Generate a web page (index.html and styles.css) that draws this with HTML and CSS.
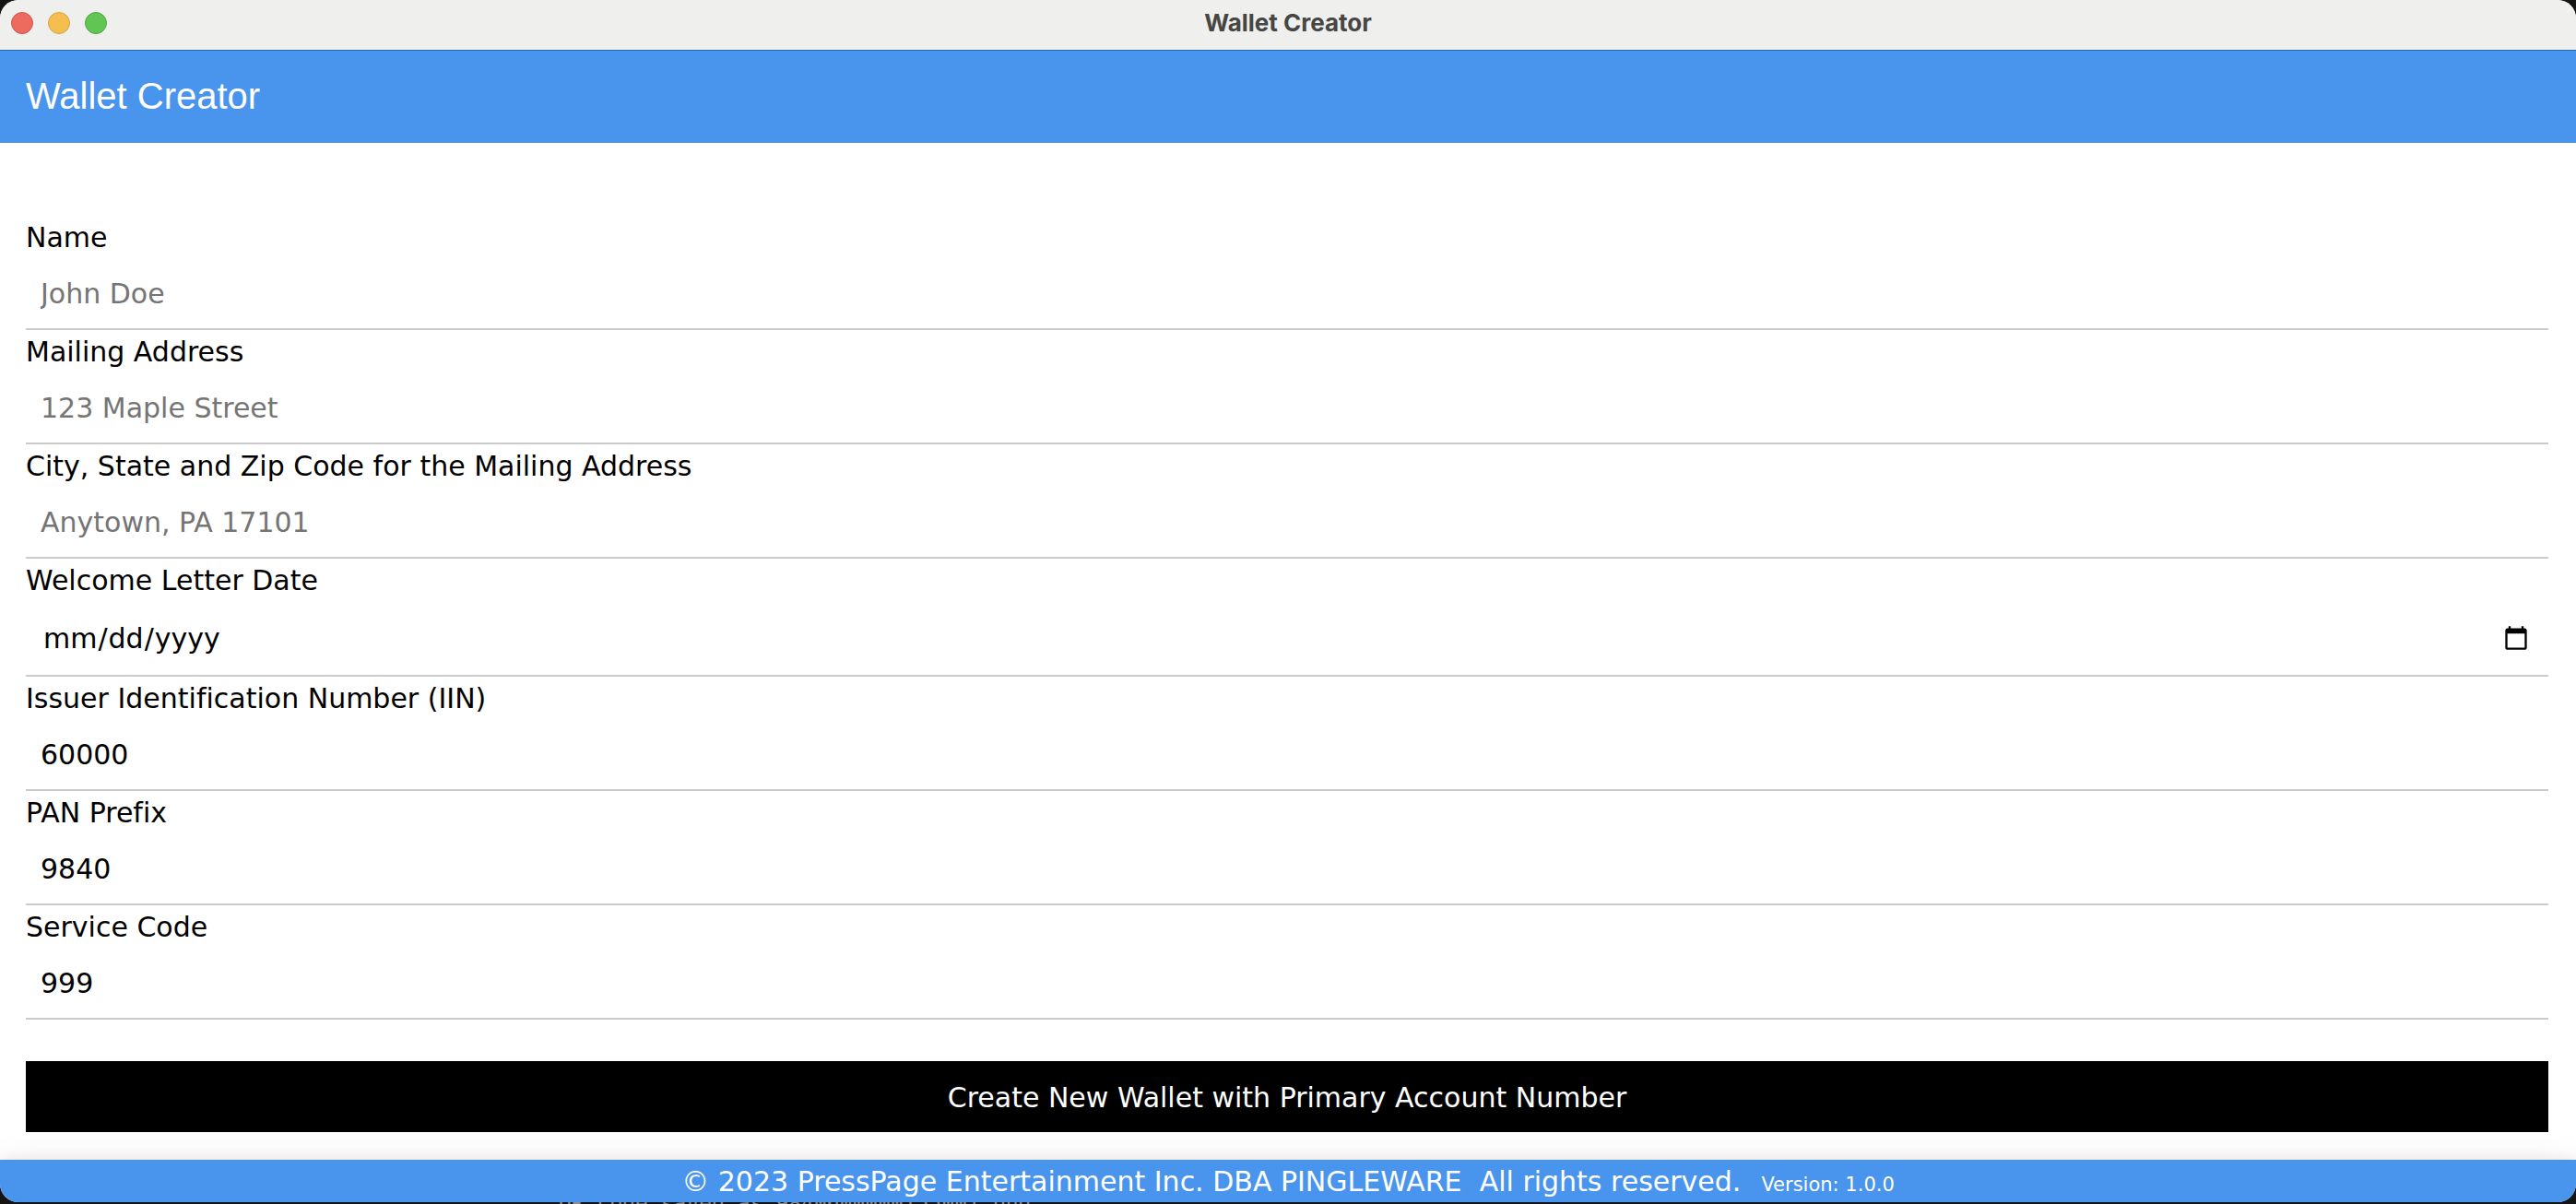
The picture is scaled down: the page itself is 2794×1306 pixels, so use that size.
FILE: index.html
```html
<!DOCTYPE html>
<html lang="en">
<head>
<meta charset="utf-8">
<title>Wallet Creator</title>
<link rel="stylesheet" href="styles.css">
</head>
<body>
<div class="window">
  <div class="titlebar">
    <div class="lights">
      <span class="light light-close"></span>
      <span class="light light-minimize"></span>
      <span class="light light-zoom"></span>
    </div>
    <div class="window-title">Wallet Creator</div>
  </div>
  <header class="app-header">
    <h1>Wallet Creator</h1>
  </header>
  <main class="content">
    <form class="wallet-form">
      <label for="name">Name</label>
      <input class="field" type="text" id="name" placeholder="John Doe">
      <label for="address">Mailing Address</label>
      <input class="field" type="text" id="address" placeholder="123 Maple Street">
      <label for="city">City, State and Zip Code for the Mailing Address</label>
      <input class="field" type="text" id="city" placeholder="Anytown, PA 17101">
      <label for="date">Welcome Letter Date</label>
      <input class="field field-date" type="date" id="date">
      <label for="iin">Issuer Identification Number (IIN)</label>
      <input class="field" type="text" id="iin" value="60000">
      <label for="pan">PAN Prefix</label>
      <input class="field" type="text" id="pan" value="9840">
      <label for="service">Service Code</label>
      <input class="field" type="text" id="service" value="999">
      <button class="submit" type="button">Create New Wallet with Primary Account Number</button>
    </form>
  </main>
  <footer class="app-footer">
    <span>© 2023 PressPage Entertainment Inc. DBA PINGLEWARE&nbsp; All rights reserved.</span>
    <span class="version">Version: 1.0.0</span>
  </footer>
</div>
<div class="terminal">QR code saved as 9840600000155001.png</div>
</body>
</html>
```
FILE: styles.css
```css
* {
  box-sizing: border-box;
}

body {
  margin: 0;
  background: #141414;
  font-family: Verdana, "DejaVu Sans", sans-serif;
  font-size: 30px;
  line-height: 47px;
  font-variant-ligatures: none;
  color: #000;
}

.window {
  display: flex;
  flex-direction: column;
  min-height: calc(100vh - 2px);
  background: #fff;
  border-radius: 20px;
  overflow: hidden;
}

.titlebar {
  display: grid;
  grid-template-columns: 1fr auto 1fr;
  align-items: center;
  height: 54px;
  padding: 0 12px 4px;
  background: #efefed;
}

.lights {
  display: flex;
  gap: 16px;
}

.light {
  width: 24px;
  height: 24px;
  border: 1px solid;
  border-radius: 50%;
}

.light-close {
  background: #ec6a5e;
  border-color: #d0544a;
}

.light-minimize {
  background: #f5bf4f;
  border-color: #d6a243;
}

.light-zoom {
  background: #61c554;
  border-color: #51a73e;
}

.window-title {
  font-family: Inter, sans-serif;
  font-size: 26px;
  font-weight: 700;
  line-height: 32px;
  color: #464644;
}

.app-header {
  padding: 19px 28px 21px;
  background: #4994ec;
  border-top: 1px solid #2268c0;
  color: #fff;
}

.app-header h1 {
  margin: 0;
  font-family: Arial, "Liberation Sans", sans-serif;
  font-size: 40px;
  font-weight: 400;
  line-height: 60px;
}

.content {
  flex: 1;
  padding: 79px 30px 30px 28px;
}

.wallet-form {
  display: flex;
  flex-direction: column;
}

.field {
  width: 100%;
  height: 77px;
  padding: 0 16px;
  border: 0;
  border-bottom: 2px solid #ccc;
  border-radius: 0;
  outline: 0;
  background: #fff;
  color: #000;
  font: inherit;
}

.field::placeholder {
  color: #757575;
}

.field-date {
  height: 81px;
  padding: 0 18px;
}

.submit {
  height: 77px;
  margin-top: 45px;
  padding: 2px 32px 0;
  border: 0;
  background: #000;
  color: #fff;
  font: inherit;
}

.app-footer {
  display: flex;
  justify-content: center;
  align-items: baseline;
  gap: 22px;
  height: 46px;
  background: #4994ec;
  box-shadow: 0 8px 20px rgba(0, 0, 0, 0.16), 0 8px 40px rgba(0, 0, 0, 0.12);
  color: #fff;
}

.version {
  font-size: 21px;
}

/* Sliver of the terminal that shows below the window */
.terminal {
  display: flex;
  align-items: center;
  height: 2px;
  padding-left: 606px;
  overflow: hidden;
  font-family: "DejaVu Sans Mono", monospace;
  font-size: 23px;
  line-height: 24px;
  color: #8c8c8c;
}
```
